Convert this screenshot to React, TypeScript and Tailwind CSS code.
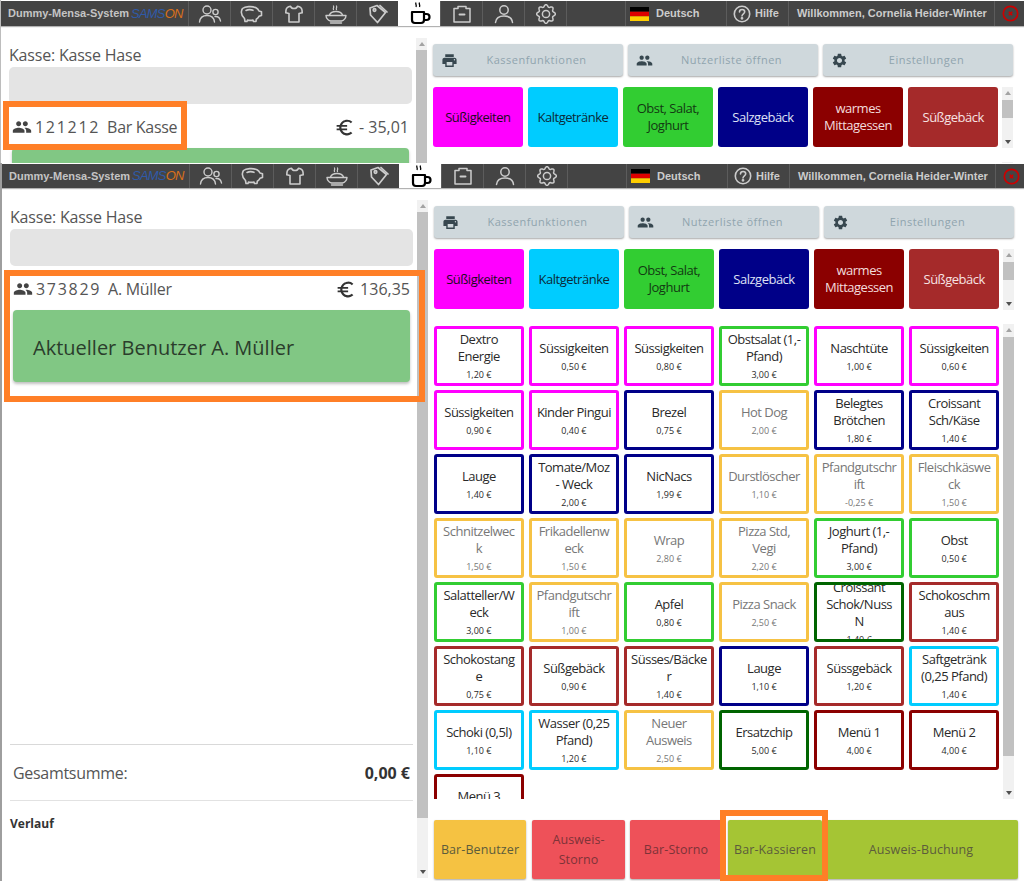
import React from "react";
import { MdPrint, MdPeople, MdSettings, MdEuroSymbol } from "react-icons/md";

const S = { fill: "none", stroke: "currentColor", strokeWidth: 1.4, strokeLinecap: "round" as const, strokeLinejoin: "round" as const };

const IconUsers = () => (
  <svg width="24" height="20" viewBox="0 0 24 20" {...S}>
    <circle cx="9" cy="6" r="4" />
    <path d="M1.5 18c.5-4.500 3-6.500 7.500-6.500s7 2 7.500 6.500" />
    <circle cx="17.500" cy="8" r="2.600" />
    <path d="M17 12.500c3.500-.3 5 1.500 5.500 4.500" />
  </svg>
);
const IconPiggy = () => (
  <svg width="23" height="18" viewBox="0 0 23 18" {...S} strokeWidth={1.6}>
    <path d="M2.500 3.500C5 1.500 12 .8 16 2.800c1.500.8 2.500 2 3 3.200l2.500.8v3.700l-2.500.8c-.6 1.200-1.500 2.200-2.700 2.900l-.3 2.300h-2.500l-.5-1.400c-1.800.3-3.700.3-5.500 0l-.5 1.400H5l-.5-3C2 11 1 8.500 1.500 6.200c.2-1 .5-2 1-2.700z" />
    <path d="M6 5.500c2-1 5-1 7-.2" />
  </svg>
);
const IconShirt = () => (
  <svg width="18" height="18" viewBox="0 0 18 18" {...S} strokeWidth={1.6}>
    <path d="M5.500 1.200C3 1.600 1.300 3 1 5l-.2 2.800L4 8.500V17h10V8.500l3.200-.7L17 5c-.3-2-2-3.400-4.500-3.800C12 2.700 10.700 3.500 9 3.500S6 2.700 5.500 1.200z" />
  </svg>
);
const IconBowl = () => (
  <svg width="22" height="20" viewBox="0 0 22 20" {...S}>
    <path d="M1 11.500h20c-.2 2.800-2 4.700-4.500 5.500h-11C3 16.200 1.200 14.300 1 11.500z" />
    <path d="M4.500 11c.8-2.300 3.300-3.500 6.500-3.500s5.700 1.200 6.500 3.500" />
    <path d="M5.500 19h11" />
    <path d="M8.500 5.500c-1-1 1-2 0-3.500M11.500 5.500c-1-1 1-2 0-3.500" strokeWidth={1.2} />
  </svg>
);
const IconTag = () => (
  <svg width="20" height="20" viewBox="0 0 20 20" {...S} strokeWidth={1.7}>
    <path d="M2 4 9 1.500l8.500 7-8 10L2.500 11z" />
    <circle cx="6.500" cy="6" r="1.300" />
    <path d="M12 1.500l7 6.500" />
  </svg>
);
const IconCup = () => (
  <svg width="22" height="25" viewBox="0 0 22 25" fill="none" stroke="#000" strokeWidth="2.200" className="ml-[3px]">
    <path d="M2 11h12v8a3 3 0 0 1-3 3H5a3 3 0 0 1-3-3z" strokeLinejoin="round" />
    <path d="M14 13h2.500a3 3 0 0 1 0 6H14" />
    <path d="M6 1.500c-1 1.500 1 2.500 0 4.500M9.500 1.500c-1 1.500 1 2.500 0 4.500" strokeWidth="1.300" />
  </svg>
);
const IconClip = () => (
  <svg width="20" height="18" viewBox="0 0 20 18" {...S} strokeWidth={1.5}>
    <path d="M2 3.500h4V1.500h8v2h4V17H2z" />
    <path d="M7.500 9.500h5" strokeWidth={1.9} />
  </svg>
);
const IconUser = () => (
  <svg width="20" height="20" viewBox="0 0 20 20" {...S} strokeWidth={1.5}>
    <circle cx="10" cy="6" r="4.200" />
    <path d="M1.500 18.500c.5-4.500 3.500-6.500 8.500-6.500s8 2 8.500 6.500" />
  </svg>
);
const gearPath = Array.from({ length: 97 }, (_, i) => {
  const a = (i / 96) * Math.PI * 2;
  const r = 8.3 + 1.1 * Math.cos(8 * a);
  return (i === 0 ? "M" : "L") + (10 + r * Math.sin(a)).toFixed(2) + " " + (10 - r * Math.cos(a)).toFixed(2);
}).join(" ");
const IconGear = () => (
  <svg width="20" height="20" viewBox="0 0 20 20" {...S} strokeWidth={1.5}>
    <path d={gearPath} />
    <circle cx="10" cy="10" r="3.600" />
  </svg>
);

const tabs = [
  { I: IconUsers }, { I: IconPiggy }, { I: IconShirt }, { I: IconBowl }, { I: IconTag },
  { I: IconCup, active: true }, { I: IconClip }, { I: IconUser }, { I: IconGear },
];

function Header({ tall }: { tall: boolean }) {
  return (
    <div className={"flex shrink-0 bg-[#444444] text-[#cccccc] font-['Liberation_Sans',Arial,sans-serif] text-[11px] font-bold shadow-[0_1px_1px_rgba(0,0,0,0.3)] " + (tall ? "h-[25px]" : "h-[24px]")}>
      <div className="w-[187px] shrink-0 flex items-center pl-[7px] gap-[2px]">
        <span className="whitespace-nowrap text-[#c4c4c4]">Dummy-Mensa-System</span>
        <span className="text-[13px] font-normal italic tracking-[-0.8px] whitespace-nowrap">
          <span className="text-[#2f5aa8]">SAMS</span>
          <span className="text-[#d9701a]">ON</span>
        </span>
      </div>
      {tabs.map(({ I, active }, i) => (
        <div
          key={i}
          className={
            "w-[42px] shrink-0 flex items-center justify-center " +
            (active ? "bg-white text-black" : "text-[#cccccc] border-l border-[#5c5c5c]")
          }
        >
          <I />
        </div>
      ))}
      <div className="w-[59px] shrink-0 border-l border-[#5c5c5c]" />
      <div className="w-[101px] shrink-0 flex items-center border-l border-[#5c5c5c] pl-[4px] gap-[7px]">
        <svg width="19" height="14" viewBox="0 0 19 14">
          <rect width="19" height="4.700" fill="#000" />
          <rect y="4.700" width="19" height="4.700" fill="#dd0000" />
          <rect y="9.300" width="19" height="4.700" fill="#ffce00" />
        </svg>
        <span>Deutsch</span>
      </div>
      <div className="w-[62px] shrink-0 flex items-center border-l border-[#5c5c5c] pl-[6px] gap-[4px]">
        <svg width="18" height="18" viewBox="0 0 18 18" fill="none" stroke="#cccccc" strokeWidth="1.600">
          <circle cx="9" cy="9" r="7.700" />
          <path d="M6.500 7c0-1.600 1.100-2.500 2.600-2.500S11.700 5.400 11.700 6.800c0 2-2.700 2-2.700 4.200" strokeLinecap="round" />
          <circle cx="9" cy="13.300" r="0.600" fill="#cccccc" />
        </svg>
        <span>Hilfe</span>
      </div>
      <div className="w-[206px] shrink-0 flex items-center border-l border-[#5c5c5c] pl-[8px] whitespace-nowrap">
        Willkommen, Cornelia Heider-Winter
      </div>
      <div className="flex-1 flex items-center border-l border-[#5c5c5c] pl-[7px]">
        <svg width="17" height="17" viewBox="0 0 17 17" fill="none" stroke="#cc0000">
          <circle cx="8.500" cy="8.500" r="7.200" strokeWidth="1.700" />
          <path d="M6.800 6.800l3.400 3.400m0-3.400l-3.400 3.400" strokeWidth="1.600" />
        </svg>
      </div>
    </div>
  );
}

function Scrollbar({ className, thumbTop, thumbH }: { className: string; thumbTop: number; thumbH: number }) {
  return (
    <div className={"w-[11px] shrink-0 bg-[#f1f1f1] flex flex-col " + className}>
      <div className="h-[12px] shrink-0 flex items-center justify-center">
        <div className="w-0 h-0 border-x-[3.5px] border-x-transparent border-b-[4px] border-b-[#a3a3a3]" />
      </div>
      <div className="flex-1 min-h-0 flex flex-col">
        <div style={{ height: thumbTop }} />
        <div className="bg-[#c1c1c1]" style={{ height: thumbH }} />
      </div>
      <div className="h-[12px] shrink-0 flex items-center justify-center">
        <div className="w-0 h-0 border-x-[3.5px] border-x-transparent border-t-[4px] border-t-[#505050]" />
      </div>
    </div>
  );
}

const cats = [
  { t: "Süßigkeiten", c: "bg-[#ff00ff] text-[#1c0a1c]" },
  { t: "Kaltgetränke", c: "bg-[#00ccff] text-[#0b2a38]" },
  { t: "Obst, Salat,\nJoghurt", c: "bg-[#32cd32] text-[#123a12]" },
  { t: "Salzgebäck", c: "bg-[#000088] text-[#dfe0f5]" },
  { t: "warmes\nMittagessen", c: "bg-[#8b0000] text-[#f3dcdc]" },
  { t: "Süßgebäck", c: "bg-[#a52a2a] text-[#f7e3e3]" },
];

const M = "border-[#ff00ff]";
const G = "border-[#32cd32]";
const N = "border-[#000088]";
const Y = "border-[#f6c244]";
const B = "border-[#a52a2a]";
const C = "border-[#00ccff]";
const D = "border-[#006400]";
const R = "border-[#8b0000]";

const products: [string, string, string][] = [
  ["Dextro\nEnergie", "1,20 €", M],
  ["Süssigkeiten", "0,50 €", M],
  ["Süssigkeiten", "0,80 €", M],
  ["Obstsalat (1,-\nPfand)", "3,00 €", G],
  ["Naschtüte", "1,00 €", M],
  ["Süssigkeiten", "0,60 €", M],
  ["Süssigkeiten", "0,90 €", M],
  ["Kinder Pingui", "0,40 €", M],
  ["Brezel", "0,75 €", N],
  ["Hot Dog", "2,00 €", Y],
  ["Belegtes\nBrötchen", "1,80 €", N],
  ["Croissant\nSch/Käse", "1,40 €", N],
  ["Lauge", "1,40 €", N],
  ["Tomate/Moz\n- Weck", "2,00 €", N],
  ["NicNacs", "1,99 €", N],
  ["Durstlöscher", "1,10 €", Y],
  ["Pfandgutschr\nift", "-0,25 €", Y],
  ["Fleischkäswe\nck", "1,50 €", Y],
  ["Schnitzelwec\nk", "1,50 €", Y],
  ["Frikadellenw\neck", "1,50 €", Y],
  ["Wrap", "2,80 €", Y],
  ["Pizza Std,\nVegi", "2,20 €", Y],
  ["Joghurt (1,-\nPfand)", "3,00 €", G],
  ["Obst", "0,50 €", G],
  ["Salatteller/W\neck", "3,00 €", G],
  ["Pfandgutschr\nift", "1,00 €", Y],
  ["Apfel", "0,80 €", G],
  ["Pizza Snack", "2,50 €", Y],
  ["Croissant\nSchok/Nuss\nN", "1,40 €", D],
  ["Schokoschm\naus", "1,40 €", B],
  ["Schokostang\ne", "0,75 €", B],
  ["Süßgebäck", "0,90 €", B],
  ["Süsses/Bäcke\nr", "1,40 €", B],
  ["Lauge", "1,10 €", N],
  ["Süssgebäck", "1,20 €", B],
  ["Saftgetränk\n(0,25 Pfand)", "1,40 €", C],
  ["Schoki (0,5l)", "1,10 €", C],
  ["Wasser (0,25\nPfand)", "1,20 €", C],
  ["Neuer\nAusweis", "2,50 €", Y],
  ["Ersatzchip", "5,00 €", D],
  ["Menü 1", "4,00 €", R],
  ["Menü 2", "4,00 €", R],
  ["Menü 3", "4,00 €", R],
];

const action = "shrink-0 rounded-[2px] flex items-center justify-center shadow-[0_1px_2px_rgba(0,0,0,0.35)]";

function Screen({ id, name, amount, tall }: { id: string; name: string; amount: string; tall: boolean }) {
  return (
    <div className="h-[718px] pt-px flex flex-col font-['Open_Sans',sans-serif]">
      <Header tall={tall} />
      <div className="flex-1 min-h-0 flex">
        <div className="w-[403px] ml-[8px] shrink-0 flex flex-col text-[#555555]">
          <div className="mt-[18px] h-[22px] leading-[22px] text-[16px] tracking-[-0.2px]">Kasse: Kasse Hase</div>
          <div className="mt-px h-[37px] rounded-[5px] bg-[#e4e4e4]" />
          <div className="mt-[11px] h-[24px] flex items-center justify-between px-[3px] text-[16px]">
            <div className="flex items-center">
              <MdPeople className="text-[20px] text-[#444444]" />
              <span className="ml-[3px] tracking-[1.7px]">{id}</span>
              <span className="ml-[7px] tracking-[-0.3px]">{name}</span>
            </div>
            <div className="flex items-center gap-[4px]">
              <MdEuroSymbol className="text-[21px] text-[#333333]" />
              <span>{amount}</span>
            </div>
          </div>
          <div className="mt-[9px] mx-[3px] h-[72px] rounded-[4px] bg-[#81c784] flex items-center pl-[20px] pt-[3px] text-[20px] text-[#2b3d2c] shadow-[0_2px_3px_rgba(0,0,0,0.25)]">
            Aktueller Benutzer {name}
          </div>
          <div className="mt-auto border-t border-[#d9d9d9]">
            <div className="h-[55px] flex items-center justify-between px-[3px] text-[16px]">
              <span className="tracking-[-0.3px]">Gesamtsumme:</span>
              <span className="font-bold text-[#333333]">0,00 €</span>
            </div>
            <div className="border-t border-[#e2e2e2] pt-[15px] pb-[49px] text-[12px] leading-[16px] font-bold text-[#333333]">
              Verlauf
            </div>
          </div>
        </div>
        <Scrollbar className="ml-[4px] mt-[12px] mb-[3px]" thumbTop={0} thumbH={606} />
        <div className="ml-[6px] flex-1 min-w-0 flex flex-col pt-[18px] pr-[6px]">
          <div className="flex gap-[5px] w-[580px]">
            {[
              [MdPrint, "Kassenfunktionen"],
              [MdPeople, "Nutzerliste öffnen"],
              [MdSettings, "Einstellungen"],
            ].map(([Ic, t]: any, i) => (
              <div
                key={i}
                className="w-[190px] h-[32px] rounded-[3px] bg-[#cfd8dc] flex items-center pl-[8px] text-[11px] tracking-[0.5px] text-[#90a4ae] shadow-[0_1px_2px_rgba(0,0,0,0.35)]"
              >
                <Ic className="text-[17px] text-[#37474f] shrink-0" />
                <span className="flex-1 text-center pr-[8px]">{t}</span>
              </div>
            ))}
          </div>
          <div className="mt-[11px] flex">
            <div className="grid grid-cols-6 gap-x-[5.400px] w-[565px]">
              {cats.map((c) => (
                <div
                  key={c.t}
                  className={"h-[60px] rounded-[3px] flex items-center justify-center text-center whitespace-pre-line text-[13px] tracking-[-0.5px] leading-[17px] " + c.c}
                >
                  {c.t}
                </div>
              ))}
            </div>
            <Scrollbar className="ml-[4px] h-[61px]" thumbTop={1} thumbH={18} />
          </div>
          <div className="mt-[14px] flex h-[475px]">
            <div className="w-[565px] shrink-0 overflow-hidden pt-[2px]">
              <div className="grid grid-cols-6 gap-x-[5.400px] gap-y-[4px]">
                {products.map(([t, p, c], i) => (
                  <div
                    key={i}
                    className={
                      "h-[60px] border-[3px] rounded-[3px] bg-white overflow-hidden flex flex-col items-center justify-center text-center " +
                      c +
                      (c === Y ? " text-[#777777]" : " text-[#2a2a2a]")
                    }
                  >
                    <div className="whitespace-pre-line text-[13px] tracking-[-0.5px] leading-[17px]">{t}</div>
                    <div className="mt-[4px] text-[9px] leading-[12px] shrink-0">{p}</div>
                  </div>
                ))}
              </div>
            </div>
            <Scrollbar className="ml-[4px]" thumbTop={1} thumbH={419} />
          </div>
          <div className="mt-[21px] flex h-[59px] text-[12.500px] tracking-[0.1px] text-[#5c5c3c] text-center leading-[20px]">
            <div className={"w-[92px] bg-[#f5c242] " + action}>Bar-Benutzer</div>
            <div className={"w-[93px] ml-[6px] bg-[#ee5159] text-[#7d3338] " + action}>Ausweis-<br />Storno</div>
            <div className={"w-[92px] ml-[5px] bg-[#ee5159] text-[#7d3338] " + action}>Bar-Storno</div>
            <div className={"w-[94px] ml-[6px] bg-[#a5c534] " + action}>Bar-Kassieren</div>
            <div className={"w-[194px] ml-[2px] bg-[#a5c534] " + action}>Ausweis-Buchung</div>
          </div>
        </div>
      </div>
    </div>
  );
}

export default function App() {
  return (
    <div className="relative w-[1024px] h-[881px] overflow-hidden bg-white">
      <div className="h-[163px] overflow-hidden border-l border-[#bdbdbd]">
        <Screen id="121212" name="Bar Kasse" amount="- 35,01" tall />
      </div>
      <div className="h-[718px] overflow-hidden border-l-2 border-[#9e9e9e]">
        <Screen id="373829" name="A. Müller" amount="136,35" tall={false} />
      </div>
      <div className="absolute left-[3px] top-[101px] w-[184px] h-[49px] border-[6px] border-[#ff7f27]" />
      <div className="absolute left-[4px] top-[270px] w-[421px] h-[132px] border-[6px] border-[#ff7f27]" />
      <div className="absolute left-[720px] top-[810px] w-[108px] h-[71px] border-[6px] border-[#ff7f27]" />
    </div>
  );
}
